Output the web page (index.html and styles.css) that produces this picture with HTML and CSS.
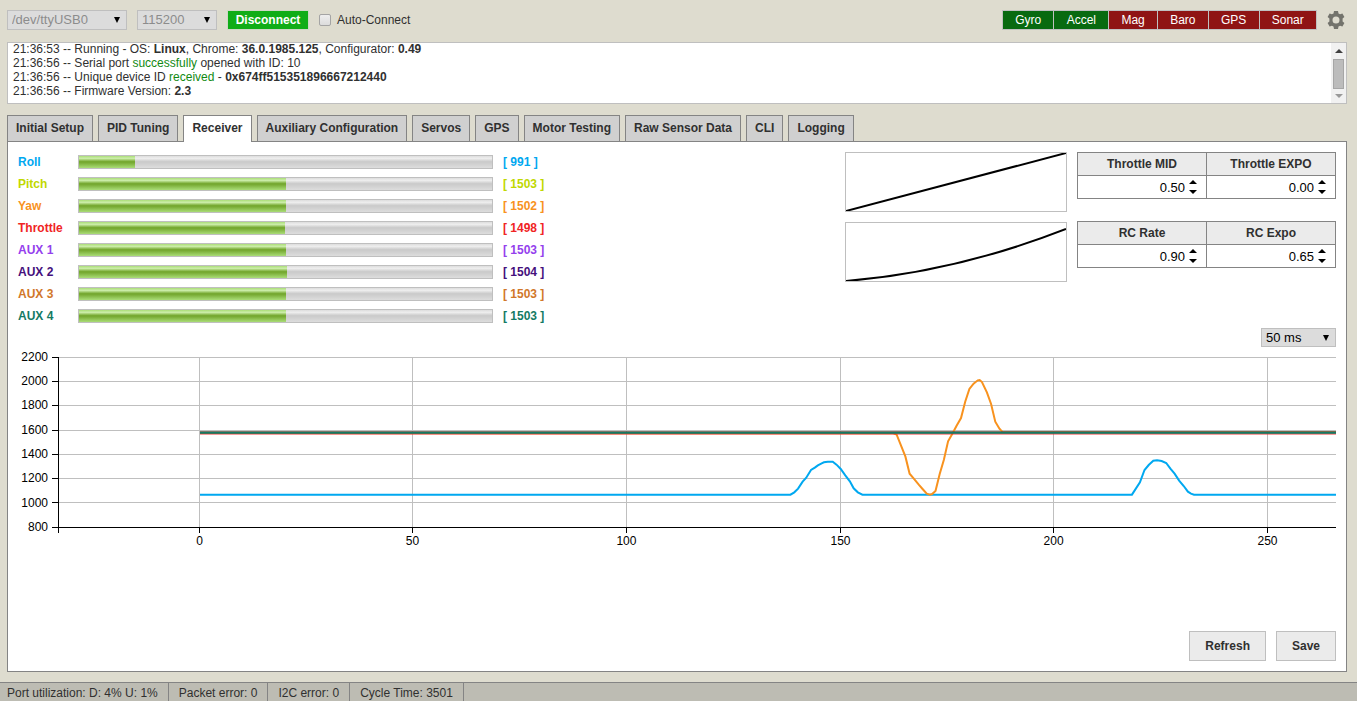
FILE: index.html
```html
<!DOCTYPE html>
<html lang="en">
<head>
<meta charset="utf-8">
<title>Configurator</title>
<link rel="stylesheet" href="styles.css">
</head>
<body>
<header class="toolbar">
  <div class="picker port"><select aria-label="Port" disabled><option>/dev/ttyUSB0</option></select><svg class="caret" viewBox="0 0 8 8"><path d="M1 1h6L4 7z"/></svg></div>
  <div class="picker baud"><select aria-label="Baud rate" disabled><option>115200</option></select><svg class="caret" viewBox="0 0 8 8"><path d="M1 1h6L4 7z"/></svg></div>
  <button class="connect" type="button">Disconnect</button>
  <label class="auto"><input type="checkbox">Auto-Connect</label>
  <ul class="sensors">
    <li class="on">Gyro</li><li class="on">Accel</li><li>Mag</li><li>Baro</li><li>GPS</li><li>Sonar</li>
  </ul>
  <button class="options" type="button" aria-label="Options">
    <svg viewBox="0 0 18 18"><path fill-rule="evenodd" d="M7 0h4l.5 2.4 1.6.9 2.3-.8 2 3.5-1.8 1.6v2.8l1.8 1.6-2 3.5-2.3-.8-1.6.9L11 18H7l-.5-2.4-1.6-.9-2.3.8-2-3.5 1.8-1.6V7.600L.6 6l2-3.500 2.300.8 1.600-.9zM9 5.500a3.500 3.500 0 1 0 0 7 3.500 3.500 0 1 0 0-7z"/></svg>
  </button>
</header>

<section class="log" aria-label="Log">
  <div class="lines">
    <p>21:36:53 -- Running - OS: <b>Linux</b>, Chrome: <b>36.0.1985.125</b>, Configurator: <b>0.49</b></p>
    <p>21:36:56 -- Serial port <span class="ok">successfully</span> opened with ID: 10</p>
    <p>21:36:56 -- Unique device ID <span class="ok">received</span> - <b>0x674ff515351896667212440</b></p>
    <p>21:36:56 -- Firmware Version: <b>2.3</b></p>
  </div>
  <div class="scroll" aria-hidden="true">
    <svg viewBox="0 0 8 4"><path d="M0 4h8L4 0z"/></svg>
    <i class="thumb"></i>
    <svg class="dim" viewBox="0 0 8 4"><path d="M0 0h8L4 4z"/></svg>
  </div>
</section>

<nav class="tabs">
  <a href="#setup">Initial Setup</a>
  <a href="#pid">PID Tuning</a>
  <a href="#receiver" class="active">Receiver</a>
  <a href="#aux">Auxiliary Configuration</a>
  <a href="#servos">Servos</a>
  <a href="#gps">GPS</a>
  <a href="#motors">Motor Testing</a>
  <a href="#sensors">Raw Sensor Data</a>
  <a href="#cli">CLI</a>
  <a href="#logging">Logging</a>
</nav>

<main class="panel">
  <div class="top">
    <div class="channels">
      <div class="channel roll"><label for="c1">Roll</label><meter id="c1" min="800" max="2200" value="991"></meter><span>[ 991 ]</span></div>
      <div class="channel pitch"><label for="c2">Pitch</label><meter id="c2" min="800" max="2200" value="1503"></meter><span>[ 1503 ]</span></div>
      <div class="channel yaw"><label for="c3">Yaw</label><meter id="c3" min="800" max="2200" value="1502"></meter><span>[ 1502 ]</span></div>
      <div class="channel throttle"><label for="c4">Throttle</label><meter id="c4" min="800" max="2200" value="1498"></meter><span>[ 1498 ]</span></div>
      <div class="channel aux1"><label for="c5">AUX 1</label><meter id="c5" min="800" max="2200" value="1503"></meter><span>[ 1503 ]</span></div>
      <div class="channel aux2"><label for="c6">AUX 2</label><meter id="c6" min="800" max="2200" value="1504"></meter><span>[ 1504 ]</span></div>
      <div class="channel aux3"><label for="c7">AUX 3</label><meter id="c7" min="800" max="2200" value="1503"></meter><span>[ 1503 ]</span></div>
      <div class="channel aux4"><label for="c8">AUX 4</label><meter id="c8" min="800" max="2200" value="1503"></meter><span>[ 1503 ]</span></div>
    </div>
    <div class="curves">
      <svg viewBox="0 0 220 58"><path d="M0 58L220 0"/></svg>
      <svg viewBox="0 0 220 58"><path d="M0 58Q110 49 220 6"/></svg>
    </div>
    <div class="rates">
      <table>
        <tr><th id="tm">Throttle MID</th><th id="te">Throttle EXPO</th></tr>
        <tr>
          <td><div class="num"><input type="number" aria-labelledby="tm" step="0.01" value="0.50"><svg viewBox="0 0 8 14"><path d="M0 4h8L4 0zM0 10h8l-4 4z"/></svg></div></td>
          <td><div class="num"><input type="number" aria-labelledby="te" step="0.01" value="0.00"><svg viewBox="0 0 8 14"><path d="M0 4h8L4 0zM0 10h8l-4 4z"/></svg></div></td>
        </tr>
      </table>
      <table>
        <tr><th id="rr">RC Rate</th><th id="re">RC Expo</th></tr>
        <tr>
          <td><div class="num"><input type="number" aria-labelledby="rr" step="0.01" value="0.90"><svg viewBox="0 0 8 14"><path d="M0 4h8L4 0zM0 10h8l-4 4z"/></svg></div></td>
          <td><div class="num"><input type="number" aria-labelledby="re" step="0.01" value="0.65"><svg viewBox="0 0 8 14"><path d="M0 4h8L4 0zM0 10h8l-4 4z"/></svg></div></td>
        </tr>
      </table>
    </div>
  </div>

  <div class="picker refresh-rate"><select aria-label="Refresh rate"><option>50 ms</option></select><svg class="caret" viewBox="0 0 8 8"><path d="M1 1h6L4 7z"/></svg></div>

  <div class="chart">
    <svg class="plot" role="img" aria-label="Receiver channels over time">
      <g class="grid">
        <path d="M0 .5h4000M0 24.500h4000M0 48.500h4000M0 73.500h4000M0 97.500h4000M0 121.500h4000M0 145.500h4000" class="rows"/>
        <line x1="11.07%" x2="11.07%" y1="0" y2="170"/>
        <line x1="27.74%" x2="27.74%" y1="0" y2="170"/>
        <line x1="44.48%" x2="44.48%" y1="0" y2="170"/>
        <line x1="61.23%" x2="61.23%" y1="0" y2="170"/>
        <line x1="77.90%" x2="77.90%" y1="0" y2="170"/>
        <line x1="94.64%" x2="94.64%" y1="0" y2="170"/>
      </g>
      <svg width="100%" height="170" viewBox="-1844 21 3357 510" preserveAspectRatio="none" class="series">
        <polyline class="s-roll" points="-1471,434 80,434 90,427 100,416 112,395 121,384 134,360 144,353 152,346 162,340 168,337 178,335 191,335 201,344 212,357 224,376 236,394 246,415 257,427 269,434 977,434 998,397 1010,360 1021,345 1033,332 1043,331 1055,333 1067,339 1078,356 1089,371 1101,392 1113,408 1124,425 1132,431 1140,434 1513,434"/>
        <polyline class="s-yaw" points="-1471,249 350,250 359,254 382,320 393,371 404,386 417,404 427,417 438,431 446,434 452,432 461,423 472,372 483,329 494,274 506,250 516,228 528,204 539,155 550,117 561,101 572,91 577,90 583,96 596,127 607,162 618,215 629,236 638,247 1513,247"/>
        <polyline class="s-throttle" points="-1471,251 1513,251"/>
        <polyline class="s-aux2" points="-1471,247 1513,247"/>
        <polyline class="s-aux4" points="-1471,248 1513,248"/>
      </svg>
      <g class="axis">
        <line x1="0" x2="100%" y1="170.500" y2="170.500"/>
        <path d="M.5 0v176M-6 .5h7M-6 24.500h7M-6 48.500h7M-6 73.500h7M-6 97.500h7M-6 121.500h7M-6 145.500h7M-6 170.500h7"/>
        <line x1="11.07%" x2="11.07%" y1="170" y2="176"/>
        <line x1="27.74%" x2="27.74%" y1="170" y2="176"/>
        <line x1="44.48%" x2="44.48%" y1="170" y2="176"/>
        <line x1="61.23%" x2="61.23%" y1="170" y2="176"/>
        <line x1="77.90%" x2="77.90%" y1="170" y2="176"/>
        <line x1="94.64%" x2="94.64%" y1="170" y2="176"/>
      </g>
      <g class="y-labels">
        <text x="-10" y="4">2200</text><text x="-10" y="28">2000</text><text x="-10" y="52">1800</text><text x="-10" y="77">1600</text><text x="-10" y="101">1400</text><text x="-10" y="125">1200</text><text x="-10" y="150">1000</text><text x="-10" y="174">800</text>
      </g>
      <g class="x-labels">
        <text x="11.07%" y="188">0</text><text x="27.74%" y="188">50</text><text x="44.48%" y="188">100</text><text x="61.23%" y="188">150</text><text x="77.90%" y="188">200</text><text x="94.64%" y="188">250</text>
      </g>
    </svg>
  </div>

  <div class="actions">
    <button type="button">Refresh</button>
    <button type="button">Save</button>
  </div>
</main>

<footer class="status">
  <span>Port utilization: D: 4% U: 1%</span><span>Packet error: 0</span><span>I2C error: 0</span><span>Cycle Time: 3501</span>
</footer>
</body>
</html>
```

FILE: styles.css
```css
* { box-sizing: border-box; }

body {
  margin: 0;
  min-height: 100vh;
  display: flex;
  flex-direction: column;
  background: #dedccf;
  color: #303030;
  font: 12px/14px "Liberation Sans", Arial, sans-serif;
}

button, input, select { font: inherit; color: inherit; margin: 0; }
p, ul { margin: 0; padding: 0; }
svg { display: block; }

/* toolbar */
.toolbar {
  display: flex;
  align-items: center;
  height: 20px;
  margin: 10px 10px 12px 7px;
}

.picker {
  display: grid;
  align-items: center;
  height: 20px;
  background: #dcdcdc;
  border: 1px solid #bfbfbf;
}
.picker select {
  grid-area: 1 / 1;
  width: 100%;
  height: 100%;
  padding: 0 4px;
  border: 0;
  background: none;
  appearance: none;
  font-size: 13px;
  color: #000;
}
.picker select:disabled { color: #8c8c8c; opacity: 1; }
.picker .caret {
  grid-area: 1 / 1;
  justify-self: end;
  width: 8px;
  margin-right: 5px;
  pointer-events: none;
}
.port { width: 120px; margin-right: 10px; }
.baud { width: 80px; margin-right: 10px; }

.connect {
  width: 82px;
  height: 20px;
  padding: 0;
  border: 1px solid #cfd8c6;
  background: #10ad17;
  color: #fff;
  font-weight: bold;
}
.auto { display: flex; align-items: center; gap: 6px; margin-left: 10px; }
.auto input {
  appearance: none;
  width: 12px;
  height: 12px;
  border: 1px solid #a4a4a4;
  border-radius: 2px;
  background: linear-gradient(#eee, #dcdcdc);
}

.sensors {
  display: flex;
  width: 315px;
  margin-left: auto;
  list-style: none;
  text-align: center;
  border: 1px solid #c0c0c0;
}
.sensors li {
  flex: 1 1 auto;
  padding: 0 12px;
  line-height: 18px;
  background: #8f1414;
  color: #fff;
}
.sensors li + li { border-left: 1px solid #c0c0c0; }
.sensors .on { background: #086a10; }

.options { margin-left: 10px; padding: 0; border: 0; background: none; }
.options svg { width: 18px; height: 18px; margin-right: 2px; fill: #73736c; }

/* log */
.log {
  display: flex;
  height: 62px;
  margin: 0 10px 11px 7px;
  background: #fff;
  border: 1px solid #bfbfbf;
}
.lines {
  flex: 1;
  display: flex;
  flex-direction: column;
  justify-content: flex-end;
  overflow: hidden;
  padding: 0 5px 5px;
}
.ok { color: #128a12; }
.scroll {
  display: flex;
  flex-direction: column;
  align-items: center;
  justify-content: space-between;
  width: 15px;
  padding: 6px 0 5px;
  background: #f1f1f1;
}
.scroll svg { width: 8px; height: 4px; fill: #404040; }
.scroll .dim { fill: #999; }
.thumb { width: 11px; height: 30px; background: #bcbcbc; border: 1px solid #a6a6a6; }

/* tabs */
.tabs { display: flex; gap: 5px; margin: 0 10px 0 7px; }
.tabs a {
  height: 26px;
  padding: 0 8px;
  border: 1px solid #848484;
  border-bottom: 0;
  background: #d0d0d0;
  color: #303030;
  font-weight: bold;
  line-height: 25px;
  text-decoration: none;
}
.tabs .active { height: 27px; margin-bottom: -1px; background: #fff; z-index: 1; }

.panel {
  flex: 1;
  display: flex;
  flex-direction: column;
  margin: 0 10px 10px 7px;
  padding: 10px;
  background: #fff;
  border: 1px solid #848484;
}
.top { display: flex; gap: 10px; margin-bottom: 5px; }

.channels { display: flex; flex-direction: column; gap: 8px; width: 540px; margin-right: auto; padding-top: 3px; }
.channel {
  display: grid;
  grid-template-columns: 50px 415px auto;
  gap: 10px;
  height: 14px;
  font-weight: bold;
}
.roll { color: #00a8f0; }
.pitch { color: #c0d800; }
.yaw { color: #f8921e; }
.throttle { color: #f02424; }
.aux1 { color: #9440ed; }
.aux2 { color: #45107c; }
.aux3 { color: #d1772a; }
.aux4 { color: #147a64; }

meter {
  appearance: none;
  display: block;
  width: 100%;
  height: 14px;
  border: 1px solid #bfbfbf;
}
meter::-webkit-meter-inner-element {
  appearance: none;
  display: block;
  position: static;
  height: 100%;
  margin: 0;
}
meter::-webkit-meter-bar {
  position: static;
  height: 100%;
  margin: 0;
  border: 0;
  border-radius: 0;
  background: linear-gradient(#ddd, #eee 20%, #ccc 45%, #ccc 55%, #ddd);
}
meter::-webkit-meter-optimum-value {
  border-radius: 0;
  background: linear-gradient(#ad7, #cea 20%, #7a3 45%, #7a3 55%, #ad7);
}

.curves { display: flex; flex-direction: column; gap: 10px; }
.curves svg {
  width: 222px;
  height: 60px;
  border: 1px solid #bfbfbf;
  fill: none;
  stroke: #000;
  stroke-width: 2;
}

.rates { display: flex; flex-direction: column; gap: 22px; }
.rates table { width: 259px; table-layout: fixed; border-collapse: collapse; }
.rates th, .rates td { height: 23px; padding: 0; border: 1px solid #848484; }
.rates th { background: #ebebeb; }
.num { display: flex; align-items: center; justify-content: flex-end; gap: 4px; padding-right: 9px; color: #000; }
.num input {
  width: 60px;
  height: 18px;
  padding: 0;
  border: 0;
  font-size: 13px;
  text-align: right;
  appearance: textfield;
}
.num input::-webkit-inner-spin-button { display: none; }
.num svg { width: 8px; height: 14px; }

.refresh-rate { align-self: flex-end; width: 75px; height: 19px; margin-bottom: 10px; }

/* chart */
.chart { margin-left: 40px; }
.plot { width: 100%; height: 190px; overflow: visible; clip-path: inset(-10px 0 -10px -40px); }
.grid { stroke: #bfbfbf; shape-rendering: crispEdges; }
.axis { stroke: #000; shape-rendering: crispEdges; fill: none; }
.series { fill: none; stroke-width: 2; }
.series polyline { vector-effect: non-scaling-stroke; }
.s-roll { stroke: #00a8f0; }
.s-yaw { stroke: #f8921e; }
.s-throttle { stroke: #f02424; opacity: .6; }
.s-aux2 { stroke: #7a4a3a; }
.s-aux4 { stroke: #147a64; }
.y-labels, .x-labels { fill: #000; }
.y-labels { text-anchor: end; }
.x-labels { text-anchor: middle; }

.actions { display: flex; justify-content: flex-end; gap: 10px; margin-top: auto; }
.actions button {
  height: 30px;
  padding: 0 15px;
  border: 1px solid #bfbfbf;
  background: #ebebeb;
  font-weight: bold;
}

.status {
  display: flex;
  height: 19px;
  border-top: 1px solid #848484;
  background: #bdbcb3;
  line-height: 20px;
}
.status span { padding: 0 10px; border-right: 1px solid #848484; }
.status span:first-child { padding-left: 7px; }
```
